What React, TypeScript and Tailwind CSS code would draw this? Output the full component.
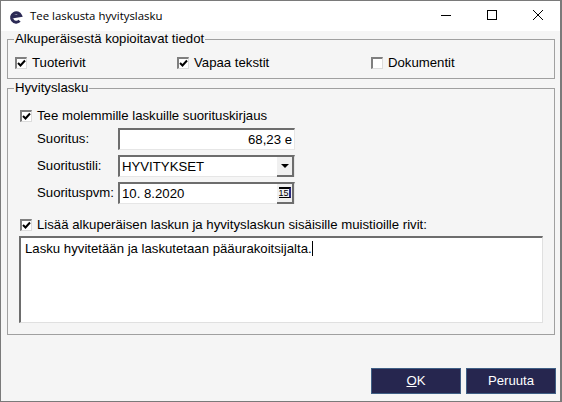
const font = "font-['Liberation_Sans',Arial,sans-serif]";

function Check({ checked }: { checked: boolean }) {
  return (
    <span className="flex h-[12px] w-[12px] shrink-0 items-center justify-center border-t-2 border-l-2 border-t-[#7f7f7f] border-l-[#7f7f7f] border-r border-b border-r-[#dcdcdc] border-b-[#dcdcdc] bg-white">
      {checked && (
        <svg width="9" height="9" viewBox="0 0 9 9">
          <path d="M1 4 L3.5 6.5 L8 1.5" fill="none" stroke="#000" strokeWidth="2" />
        </svg>
      )}
    </span>
  );
}

function Option({ label, checked, className }: { label: string; checked: boolean; className: string }) {
  return (
    <div className={`flex items-center gap-[5px] ${className}`}>
      <Check checked={checked} />
      <span className="text-[13.2px] leading-[16px] text-black">{label}</span>
    </div>
  );
}

function Field({ label, children }: { label: string; children: React.ReactNode }) {
  return (
    <div className="flex h-[22px] items-center">
      <span className="w-[98px] shrink-0 pl-[17px] text-[13.2px] leading-[16px]">{label}</span>
      {children}
    </div>
  );
}

const inset = "flex h-[22px] w-[177px] items-center border-t-2 border-l-2 border-t-[#6d6d6d] border-l-[#6d6d6d] border-r border-b border-r-[#e6e6e6] border-b-[#e6e6e6] bg-white text-[13.2px]";
const sideButton = "ml-auto flex h-[20px] w-[17px] items-center justify-center border-r-2 border-b-2 border-r-[#6d6d6d] border-b-[#6d6d6d] bg-[#f0f0f0]";

export default function App() {
  return (
    <div className={`flex h-[402px] w-[562px] flex-col border border-r-2 border-[#7a7a7a] bg-[#f5f5f5] text-black ${font}`}>
      <div className="flex h-[30px] shrink-0 items-center bg-white">
        <svg className="ml-[8px]" width="14" height="15" viewBox="0 0 14 15">
          <path d="M2.6 8 L11.6 6.6 A4.7 4.7 0 1 0 10.6 11.8" fill="none" stroke="#2c2a55" strokeWidth="3" />
        </svg>
        <span className="ml-[7px] font-['Open_Sans',sans-serif] text-[11.4px] leading-[16px]">Tee laskusta hyvityslasku</span>
        <div className="ml-auto flex items-center">
          <svg width="46" height="30" viewBox="0 0 46 30"><path d="M19 14.5 H29" stroke="#000" /></svg>
          <svg width="46" height="30" viewBox="0 0 46 30"><rect x="19.5" y="9.5" width="9" height="9" fill="none" stroke="#000" /></svg>
          <svg width="46" height="30" viewBox="0 0 46 30"><path d="M19 9 L29 19 M29 9 L19 19" stroke="#000" fill="none" /></svg>
        </div>
      </div>

      <div className="flex flex-1 flex-col pl-[6px] pr-[4px]">
        <fieldset className="h-[48px] w-[548px] border border-[#a0a0a0] pl-[7px]">
          <legend className="ml-[-1px] px-[1px] text-[13.2px] leading-[16px]">Alkuperäisestä kopioitavat tiedot</legend>
          <div className="flex h-[32px] items-center">
            <Option label="Tuoterivit" checked className="w-[162px]" />
            <Option label="Vapaa tekstit" checked className="w-[194px]" />
            <Option label="Dokumentit" checked={false} className="" />
          </div>
        </fieldset>

        <fieldset className="mt-[1px] h-[255px] w-[548px] border border-[#a0a0a0] pl-[12px]">
          <legend className="ml-[-6px] px-[1px] text-[13.2px] leading-[16px]">Hyvityslasku</legend>
          <Option label="Tee molemmille laskuille suorituskirjaus" checked className="mt-[12px]" />
          <div className="mt-[4px] flex flex-col gap-[5px]">
            <Field label="Suoritus:">
              <div className={`${inset} justify-end pr-[2px]`}>68,23 e</div>
            </Field>
            <Field label="Suoritustili:">
              <div className={`${inset} pl-[2px]`}>
                HYVITYKSET
                <span className={sideButton}>
                  <svg width="8" height="4" viewBox="0 0 8 4"><path d="M0 0 H8 L4 4 Z" fill="#000" /></svg>
                </span>
              </div>
            </Field>
            <Field label="Suorituspvm:">
              <div className={`${inset} pl-[2px]`}>
                10. 8.2020
                <span className={sideButton}>
                  <span className="block h-[11px] w-[12px] border-t-2 border-b border-r-2 border-t-black border-b-black border-r-[#2c2a80] text-center text-[9px] leading-[8px]">15</span>
                </span>
              </div>
            </Field>
          </div>
          <Option label="Lisää alkuperäisen laskun ja hyvityslaskun sisäisille muistioille rivit:" checked className="mt-[13px]" />
          <div className="ml-[-1px] mt-[3px] h-[87px] w-[524px] border-t-2 border-l-2 border-t-[#6d6d6d] border-l-[#6d6d6d] border-r border-b border-r-[#e0e0e0] border-b-[#e0e0e0] bg-white pl-[4px] pt-[3px] text-[13.2px] leading-[16px]">
            Lasku hyvitetään ja laskutetaan pääurakoitsijalta.<span className="inline-block h-[15px] w-px bg-black align-[-3px]" />
          </div>
        </fieldset>

        <div className="mt-auto mb-[7px] flex justify-end gap-[5px]">
          <button className="h-[26px] w-[90px] border border-[#3f5f85] bg-[#26264f] text-[13.2px] text-white"><span className="underline">O</span>K</button>
          <button className="h-[26px] w-[90px] border border-[#3f5f85] bg-[#26264f] text-[13.2px] text-white">Peruuta</button>
        </div>
      </div>
    </div>
  );
}
